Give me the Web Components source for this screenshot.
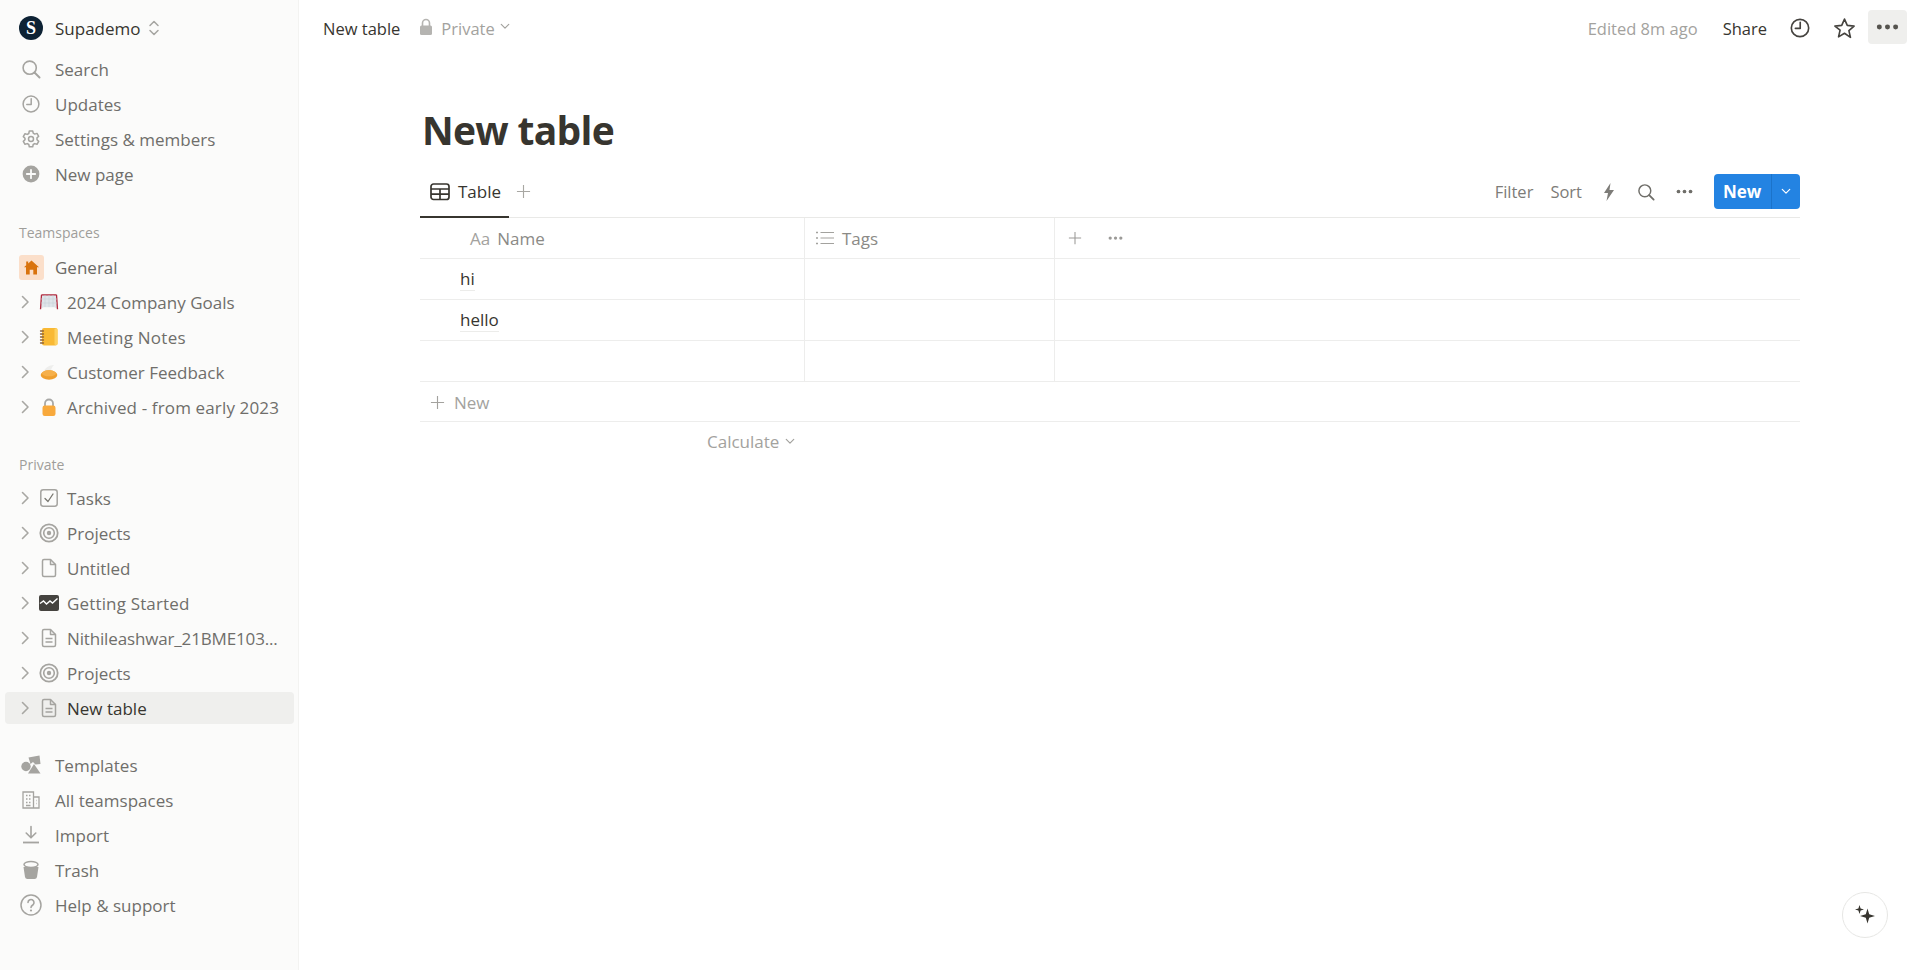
<!DOCTYPE html>
<html lang="en">
<head>
<meta charset="utf-8">
<title>New table</title>
<style>
  html, body { margin: 0; height: 100%; background: #fff; overflow: hidden; }
  body { font-family: "Open Sans", "Noto Sans", sans-serif; color: #37352f; }
</style>
</head>
<body>
<app-shell>
  <side-bar slot="side"></side-bar>
  <top-bar slot="main"></top-bar>
  <page-body slot="main"></page-body>
</app-shell>
<spark-button></spark-button>

<script>
// every icon lives here, keyed by name
const ICONS = {
  search: `<svg viewBox="0 0 20 20" fill="none" stroke="currentColor" stroke-width="1.6"><circle cx="8.7" cy="8.7" r="6.6"/><path d="M13.500 13.500l5 5" stroke-width="2" stroke-linecap="round"/></svg>`,
  clock: `<svg viewBox="0 0 20 20" fill="none" stroke="currentColor" stroke-width="1.5"><circle cx="10" cy="10" r="7.9"/><path d="M10.2 4.8v5.6H5.8" stroke-linecap="round" stroke-linejoin="round"/></svg>`,
  gear: `<svg viewBox="0 0 20 20" fill="none" stroke="currentColor" stroke-width="1.5" stroke-linejoin="round"><path d="M8.3 1.9h3.4l.5 2.3 1.5.9 2.3-.7 1.7 2.9-1.7 1.6v1.9l1.7 1.6-1.7 2.9-2.3-.7-1.5.9-.5 2.3H8.3l-.5-2.3-1.5-.9-2.3.7-1.7-2.9 1.7-1.6V9.2L2.300 7.600l1.700-2.900 2.300.7 1.500-.9z"/><circle cx="10" cy="10" r="2.500"/></svg>`,
  plusCircle: `<svg viewBox="0 0 20 20"><circle cx="10" cy="10" r="8.400" fill="currentColor"/><path d="M10 5.800v8.400M5.800 10h8.400" stroke="#fbfbfa" stroke-width="1.800" stroke-linecap="round"/></svg>`,
  updown: `<svg viewBox="0 0 12 18" fill="none" stroke="currentColor" stroke-width="1.500" stroke-linecap="round" stroke-linejoin="round"><path d="M2 6.500l4-4 4 4M2 11.500l4 4 4-4"/></svg>`,
  chevR: `<svg viewBox="0 0 10 14" fill="none" stroke="currentColor" stroke-width="1.600" stroke-linecap="round" stroke-linejoin="round"><path d="M2.500 1.500L8 7l-5.500 5.500"/></svg>`,
  chevD: `<svg viewBox="0 0 12 8" fill="none" stroke="currentColor" stroke-width="1.400" stroke-linecap="round" stroke-linejoin="round"><path d="M1.500 1.500L6 6l4.500-4.500"/></svg>`,
  house: `<svg viewBox="0 0 25 25"><rect width="25" height="25" rx="3" fill="#fbdfca"/><path d="M12.500 5.500l7.500 6.800h-2v7.200h-3.700v-4.700h-3.600v4.700H7v-7.200H5l2.200-2V6.500h2v2z" fill="#d9730d"/></svg>`,
  goal: `<svg viewBox="0 0 20 20" fill="none"><path d="M2.500 2.800h15l1 14.200-3-1.700H4.500l-3 1.700z" fill="#dfe5ea"/><path d="M2.500 2.800h15M2.500 2.800l-1 14.400M17.500 2.800l1 14.400" stroke="#b1283c" stroke-width="1.300"/><path d="M6 3v12M10 3v12M14 3v12M2 7h16M2 11h16" stroke="#c9d0d6" stroke-width=".6"/></svg>`,
  notebook: `<svg viewBox="0 0 20 20"><rect x="3" y="1" width="15.500" height="17.500" rx="2" fill="#f9b934"/><rect x="15.500" y="1.500" width="3" height="16.500" rx="1" fill="#fdd160"/><path d="M1.500 4h3M1.500 7h3M1.500 10h3M1.500 13h3M1.500 16h3" stroke="#8c6239" stroke-width="1.300" stroke-linecap="round"/></svg>`,
  pie: `<svg viewBox="0 0 20 20"><path d="M5 9C7 5 10 3.500 15 3c-2 2-3 4-3 6z" fill="#eeeeec"/><ellipse cx="10" cy="13" rx="8.300" ry="4.700" fill="#ef9f2e"/><ellipse cx="10" cy="11.300" rx="7" ry="3" fill="#f6b04a"/></svg>`,
  lockOrange: `<svg viewBox="0 0 20 20" fill="none"><path d="M6 9V6.500a4 4 0 018 0V9" stroke="#a8a8a6" stroke-width="1.800"/><rect x="3.500" y="8.500" width="13" height="10.500" rx="2.200" fill="#f8a93c"/></svg>`,
  lock: `<svg viewBox="0 0 14 18" fill="none"><path d="M3.500 8V5a3.500 3.500 0 017 0v3" stroke="currentColor" stroke-width="1.600"/><rect x="1" y="7.500" width="12" height="9.500" rx="1.500" fill="currentColor"/></svg>`,
  check: `<svg viewBox="0 0 20 20" fill="none" stroke="currentColor" stroke-width="1.500"><rect x="1.800" y="1.800" width="16.400" height="16.400" rx="2.400"/><path d="M6 10.500l3 3 5-7.500" stroke-linecap="round" stroke-linejoin="round" stroke-width="1.300" stroke="#77766f"/></svg>`,
  target: `<svg viewBox="0 0 20 20" fill="none" stroke="currentColor"><circle cx="10" cy="10" r="8.700" stroke-width="1.800"/><circle cx="10" cy="10" r="5.300" stroke-width="1.600"/><circle cx="10" cy="10" r="2.200" fill="currentColor" stroke="none"/></svg>`,
  page: `<svg viewBox="0 0 20 20" fill="none" stroke="currentColor" stroke-width="1.500" stroke-linejoin="round"><path d="M3.500 3a1.500 1.500 0 011.500-1.500h6.500l5 5V17a1.500 1.500 0 01-1.500 1.500H5A1.500 1.500 0 013.500 17z"/><path d="M11.500 1.500v5h5"/></svg>`,
  pageText: `<svg viewBox="0 0 20 20" fill="none" stroke="currentColor" stroke-width="1.500" stroke-linejoin="round"><path d="M3.500 3a1.500 1.500 0 011.500-1.500h6.500l5 5V17a1.500 1.500 0 01-1.500 1.500H5A1.500 1.500 0 013.500 17z"/><path d="M11.500 1.500v5h5M6.500 10.500h7M6.500 14h7"/></svg>`,
  chart: `<svg viewBox="0 0 20 20"><rect y="2" width="20" height="16" rx="2" fill="#45433f"/><path d="M1 10.500l3.500-2.500 3 3 3.500-3 2.500 2 5-4.500" fill="none" stroke="#fff" stroke-width="1.400"/></svg>`,
  shapes: `<svg viewBox="0 0 20 20" fill="currentColor"><circle cx="5" cy="11.500" r="4.700"/><path d="M7.500 2.500L18.500 .5 19.500 9l-5 .5-2.500-2.500-2.500 2z"/><path d="M13 9l6.500 9.500H7z"/></svg>`,
  building: `<svg viewBox="0 0 20 20" fill="none" stroke="currentColor" stroke-width="1.300"><path d="M2 2h10.500v16H2zM12.500 7H18v11h-5.500z"/><path d="M5 5.500h1.500M8 5.500h1.500M5 9h1.500M8 9h1.500M5 12.500h1.500M8 12.500h1.500M5 15.500h4.500M15 10.500h.5M15 13.500h.5"/></svg>`,
  import: `<svg viewBox="0 0 20 20" fill="none" stroke="currentColor" stroke-width="1.600"><path d="M10 1.500v10.800M5.200 8L10 12.800 14.800 8" stroke-linecap="round" stroke-linejoin="round"/><path d="M2 17.500h16" stroke-width="1.800"/></svg>`,
  trash: `<svg viewBox="0 0 20 20"><path d="M2.500 7h15l-1.500 10a2.500 2.500 0 01-2.500 2h-7A2.500 2.500 0 014 17z" fill="currentColor"/><ellipse cx="10" cy="4.500" rx="7" ry="3" fill="none" stroke="currentColor" stroke-width="1.500"/></svg>`,
  help: `<svg viewBox="0 0 22 22" fill="none" stroke="currentColor" stroke-width="1.500"><circle cx="11" cy="11" r="10"/><path d="M8 8.500a3 3 0 115 2.300c-1.100.8-2 1.300-2 2.700" stroke-width="1.600" stroke-linecap="round"/><circle cx="11" cy="16.500" r="1.100" fill="currentColor" stroke="none"/></svg>`,
  star: `<svg viewBox="0 0 24 24" fill="none" stroke="currentColor" stroke-width="1.700" stroke-linejoin="round"><path d="M12 2.200l2.900 6.600 7.100.7-5.400 4.700 1.600 7L12 17l-6.200 3.700 1.600-7L2 9.500l7.100-.7z"/></svg>`,
  dots: `<svg viewBox="0 0 24 6" fill="currentColor"><circle cx="3.500" cy="3" r="2.600"/><circle cx="12" cy="3" r="2.600"/><circle cx="20.500" cy="3" r="2.600"/></svg>`,
  table: `<svg viewBox="0 0 20 18" fill="none" stroke="currentColor" stroke-width="1.700"><rect x="1" y="1" width="18" height="15.500" rx="2.500"/><path d="M1 6h18M1 11.200h18M10 6v10.500"/></svg>`,
  plus: `<svg viewBox="0 0 16 16" fill="none" stroke="currentColor" stroke-width="1.200"><path d="M8 1v14M1 8h14"/></svg>`,
  bolt: `<svg viewBox="0 0 12 18" fill="currentColor"><path d="M7.500 0L1 10h4L3.500 18 11 7H6.500z"/></svg>`,
  list: `<svg viewBox="0 0 18 14" fill="none" stroke="currentColor" stroke-width="1.200"><path d="M4.500 1.500H18M4.500 7H18M4.500 12.500H18"/><path d="M0 1.500h2M0 7h2M0 12.500h2" stroke-width="1.400"/></svg>`,
  sparkle: `<svg viewBox="0 0 22 22" fill="currentColor"><path d="M5.500 1l1.100 3.400L10 5.500 6.600 6.600 5.500 10 4.400 6.600 1 5.500l3.400-1.100z"/><path d="M13.500 4.500l1.700 5.800 5.800 1.700-5.800 1.700-1.700 5.800-1.700-5.800L6 12l5.800-1.700z"/></svg>`
};

class NIcon extends HTMLElement {
  connectedCallback() {
    const s = this.getAttribute('size') || 20;
    const h = this.getAttribute('h') || s;
    this.attachShadow({ mode: 'open' }).innerHTML = `
      <style>
        :host { display: inline-flex; flex: none; width: ${s}px; height: ${h}px; }
        svg { display: block; width: 100%; height: 100%; }
      </style>${ICONS[this.getAttribute('name')] || ''}`;
  }
}
customElements.define('n-icon', NIcon);

class NavRow extends HTMLElement {
  connectedCallback() {
    const icon = this.getAttribute('icon');
    const size = this.getAttribute('icon-size') || 20;
    const tree = this.hasAttribute('tree');
    this.attachShadow({ mode: 'open' }).innerHTML = `
      <style>
        :host { display: flex; align-items: center; height: 32px; margin: 0 4px 3px 5px; border-radius: 4px;
                padding-left: ${tree ? 15 : 16}px; color: #6f6e6a; font-size: 17px; font-weight: 400; }
        :host([selected]) { background: #efefed; color: #37352f; font-weight: 500; }
        .chev { color: #a8a7a3; width: 12px; display: flex; margin-right: 5px; }
        .ic { width: ${tree ? 24 : 20}px; display: flex; justify-content: center; flex: none; color: #a5a4a0; margin-right: ${tree ? 6 : 14}px; }
        span.t { white-space: nowrap; }
      </style>
      ${tree ? `<div class="chev"><n-icon name="chevR" size="10" h="14"></n-icon></div>` : ''}
      <div class="ic"><n-icon name="${icon}" size="${size}"></n-icon></div>
      <span class="t"><slot></slot></span>`;
  }
}
customElements.define('nav-row', NavRow);

class SideBar extends HTMLElement {
  connectedCallback() {
    const simple = (items) => items.map(([i, t, s]) => `<nav-row icon="${i}" ${s ? `icon-size="${s}"` : ''}>${t}</nav-row>`).join('');
    const tree = (items) => items.map(([i, t, x]) => `<nav-row tree icon="${i}" ${x || ''}>${t}</nav-row>`).join('');
    this.attachShadow({ mode: 'open' }).innerHTML = `
      <style>
        :host { display: block; width: 299px; height: 970px; box-sizing: border-box; flex: none;
                background: #fbfbfa; border-right: 1px solid #f3f3f1; padding-top: 10px; }
        .ws { display: flex; align-items: center; height: 36px; padding-left: 19px; margin-bottom: 7px; font-size: 17px; font-weight: 500; color: #37352f; }
        .logo { width: 24px; height: 24px; border-radius: 50%; background: #0d2234; color: #fff; font: bold 18px/24px "Liberation Serif", serif; text-align: center; margin-right: 12px; }
        .ws n-icon { margin-left: 7px; color: #a5a4a0; }
        h4 { margin: 0; height: 20px; line-height: 20px; padding-left: 19px; font-size: 14px; font-weight: 400; color: #9f9e9a; }
        .team { margin-top: 33px; margin-bottom: 8px; }
        .priv { margin-top: 32px; margin-bottom: 7px; }
        .bottom { margin-top: 25px; }
        .general { padding-left: 19px; display: flex; align-items: center; height: 32px; margin-bottom: 3px;
                   font-size: 17px; color: #6a6965; font-weight: 500; }
        .general n-icon { margin-right: 11px; }
      </style>
      <div class="ws"><span class="logo">S</span>Supademo<n-icon name="updown" size="12" h="18"></n-icon></div>
      ${simple([['search', 'Search'], ['clock', 'Updates'], ['gear', 'Settings &amp; members'], ['plusCircle', 'New page']])}
      <h4 class="team">Teamspaces</h4>
      <div class="general"><n-icon name="house" size="25"></n-icon>General</div>
      ${tree([['goal', '2024 Company Goals'], ['notebook', 'Meeting Notes', 'style="letter-spacing:.25px"'], ['pie', 'Customer Feedback'], ['lockOrange', 'Archived - from early 2023', 'style="letter-spacing:.14px"']])}
      <h4 class="priv">Private</h4>
      ${tree([['check', 'Tasks'], ['target', 'Projects'], ['page', 'Untitled'], ['chart', 'Getting Started', 'style="letter-spacing:.16px"'], ['pageText', 'Nithileashwar_21BME103...', 'style="letter-spacing:-.15px"'], ['target', 'Projects'], ['pageText', 'New table', 'selected']])}
      <div class="bottom">
      ${simple([['shapes', 'Templates'], ['building', 'All teamspaces'], ['import', 'Import'], ['trash', 'Trash'], ['help', 'Help &amp; support', 22]])}
      </div>`;
  }
}
customElements.define('side-bar', SideBar);

class TopBar extends HTMLElement {
  connectedCallback() {
    this.attachShadow({ mode: 'open' }).innerHTML = `
      <style>
        :host { display: flex; align-items: center; height: 56px; padding: 0 13px 0 24px; font-size: 16.5px; color: #37352f; }
        .priv { display: flex; align-items: center; color: #a3a29e; margin-left: 19px; }
        .priv n-icon:first-child { margin-right: 8px; margin-top: -3px; color: #b5b4b1; }
        .priv n-icon:last-child { margin-left: 5px; margin-top: -4px; }
        .sp { flex: 1; }
        .ed { color: #a3a29e; margin-right: 25px; }
        .clock { margin-left: 22px; color: #45433f; }
        .star { margin-left: 22px; color: #45433f; }
        .more { width: 39px; height: 34px; border-radius: 4px; background: #efefed; color: #55534e; margin-left: 12px; margin-top: -2px; display: flex; align-items: center; justify-content: center; }
      </style>
      <span>New table</span>
      <div class="priv"><n-icon name="lock" size="14" h="18"></n-icon><span>Private</span><n-icon name="chevD" size="10" h="7"></n-icon></div>
      <div class="sp"></div>
      <span class="ed">Edited 8m ago</span>
      <span>Share</span>
      <n-icon class="clock" name="clock" size="22"></n-icon>
      <n-icon class="star" name="star" size="23"></n-icon>
      <div class="more"><n-icon name="dots" size="23" h="6"></n-icon></div>`;
  }
}
customElements.define('top-bar', TopBar);

class TableRow extends HTMLElement {
  connectedCallback() {
    this.attachShadow({ mode: 'open' }).innerHTML = `
      <style>
        :host { display: grid; grid-template-columns: 385px 250px 1fr; height: 41px; box-sizing: border-box; border-bottom: 1px solid #ededec; }
        ::slotted(*) { display: flex; align-items: center; min-width: 0; }
        ::slotted(:not(:last-child)) { border-right: 1px solid #ededec; }
      </style>
      <slot></slot>`;
  }
}
customElements.define('table-row', TableRow);

class PageBody extends HTMLElement {
  connectedCallback() {
    const row = (t) => `<table-row><div class="name">${t ? `<span>${t}</span>` : ''}</div><div></div><div></div></table-row>`;
    this.attachShadow({ mode: 'open' }).innerHTML = `
      <style>
        :host { display: block; padding: 46px 120px 0 121px; }
        h1 { margin: 0; height: 56px; line-height: 56px; font-size: 39px; letter-spacing: -.7px; font-weight: 700; color: #37352f; padding-left: 2px; }
        .bar { display: flex; align-items: flex-end; height: 59px; border-bottom: 1px solid #e9e9e7; }
        .tab { display: flex; align-items: center; height: 46px; width: 89px; box-sizing: border-box; padding: 0 0 5px 10px; border-bottom: 2px solid #37352f; margin-bottom: -1px; font-size: 17px; font-weight: 500; color: #37352f; }
        .tab n-icon { margin-right: 8px; }
        .addview { color: #a8a7a3; align-self: flex-end; margin: 0 0 18px 7px; }
        .sp { flex: 1; }
        .tools { display: flex; align-items: center; height: 35px; margin-bottom: 8px; color: #7d7c78; font-size: 16.5px; }
        .tools span + span { margin-left: 17px; }
        .b { margin-left: 21px; }
        .s { margin-left: 22px; color: #6f6e69; }
        .d { margin-left: 21px; color: #6f6e69; }
        .new { margin-left: 21px; width: 86px; height: 35px; display: flex; border-radius: 4px; background: #2383e2; color: #fff; font-weight: 700; font-size: 17px; }
        .new b { width: 58px; box-sizing: border-box; padding-left: 9px; line-height: 35px; font-weight: 700; border-right: 1px solid #1b73ca; }
        .new div { flex: 1; display: flex; align-items: center; justify-content: center; }
        .head { color: #8b8a86; font-size: 17px; }
        .aa { padding-left: 50px; }
        .aa i { font-style: normal; margin-right: 7px; color: #a3a29e; }
        .tg n-icon { margin: 0 8px 0 11px; color: #a3a29e; }
        .pm n-icon:first-child { margin-left: 13px; color: #9b9a97; }
        .pm n-icon:last-child { margin-left: 26px; color: #9b9a97; }
        .name { padding-left: 40px; font-size: 17px; font-weight: 500; color: #37352f; }
        .name span { border-bottom: 1px solid #ececea; line-height: 22px; }
        .add { display: flex; align-items: center; height: 40px; box-sizing: border-box; padding: 1px 0 0 10px; border-bottom: 1px solid #ededec; color: #a3a29e; font-size: 17px; }
        .add n-icon { margin-right: 9px; }
        .calc { display: flex; align-items: center; height: 38px; padding-left: 287px; color: #a3a29e; font-size: 17px; }
        .calc n-icon { margin-left: 6px; }
      </style>
      <h1>New table</h1>
      <div class="bar">
        <div class="tab"><n-icon name="table" size="20" h="18"></n-icon>Table</div>
        <n-icon class="addview" name="plus" size="15"></n-icon>
        <div class="sp"></div>
        <div class="tools">
          <span>Filter</span><span>Sort</span>
          <n-icon class="b" name="bolt" size="12" h="18"></n-icon>
          <n-icon class="s" name="search" size="18"></n-icon>
          <n-icon class="d" name="dots" size="17" h="5"></n-icon>
          <div class="new"><b>New</b><div><n-icon name="chevD" size="10" h="7"></n-icon></div></div>
        </div>
      </div>
      <table-row class="head">
        <div class="aa"><i>Aa</i>Name</div>
        <div class="tg"><n-icon name="list" size="18" h="14"></n-icon>Tags</div>
        <div class="pm"><n-icon name="plus" size="14"></n-icon><n-icon name="dots" size="15" h="4"></n-icon></div>
      </table-row>
      ${row('hi')}${row('hello')}${row('')}
      <div class="add"><n-icon name="plus" size="15"></n-icon>New</div>
      <div class="calc">Calculate<n-icon name="chevD" size="10" h="7"></n-icon></div>`;
  }
}
customElements.define('page-body', PageBody);

class AppShell extends HTMLElement {
  constructor() {
    super();
    this.attachShadow({ mode: 'open' }).innerHTML = `
      <style>
        :host { display: flex; width: 100%; height: 970px; }
        main { flex: 1; min-width: 0; }
      </style>
      <slot name="side"></slot>
      <main><slot name="main"></slot></main>`;
  }
}
customElements.define('app-shell', AppShell);

class SparkButton extends HTMLElement {
  constructor() {
    super();
    this.attachShadow({ mode: 'open' }).innerHTML = `
      <style>
        :host { position: fixed; left: 1842px; top: 892px; width: 46px; height: 46px; box-sizing: border-box; border-radius: 50%;
                background: #fff; border: 1px solid #e6e6e4; color: #37352f; display: flex; align-items: center; justify-content: center; }
      </style>
      <n-icon name="sparkle" size="22"></n-icon>`;
  }
}
customElements.define('spark-button', SparkButton);
</script>
</body>
</html>
